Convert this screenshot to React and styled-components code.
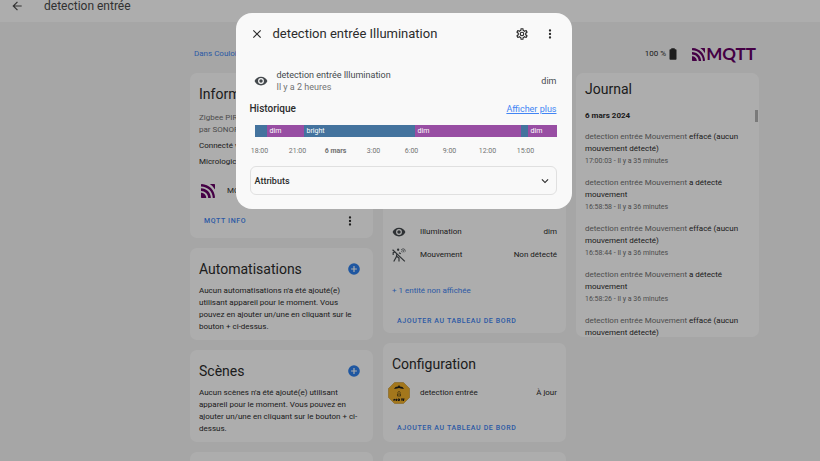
import React from "react";
import styled, { createGlobalStyle } from "styled-components";

const GlobalStyle = createGlobalStyle`
  * { box-sizing: border-box; }
  body { margin: 0; overflow: hidden; background: #f5f5f5; color: #2c2c2c; font: 8px/12px Roboto, sans-serif; }
  button { font: inherit; color: inherit; background: none; border: 0; padding: 0; cursor: pointer; }
  h1, h2, h3, p, ul { margin: 0; padding: 0; font-weight: 400; }
  a { color: #4285f4; text-decoration: none; }
`;

const paths = {
  back: "M20,11V13H8L13.5,18.5L12.08,19.92L4.16,12L12.08,4.08L13.5,5.5L8,11H20Z",
  close: "M19,6.41L17.59,5L12,10.59L6.41,5L5,6.41L10.59,12L5,17.59L6.41,19L12,13.41L17.59,19L19,17.59L13.41,12L19,6.41Z",
  dots: "M12,16A2,2 0 0,1 14,18A2,2 0 0,1 12,20A2,2 0 0,1 10,18A2,2 0 0,1 12,16M12,10A2,2 0 0,1 14,12A2,2 0 0,1 12,14A2,2 0 0,1 10,12A2,2 0 0,1 12,10M12,4A2,2 0 0,1 14,6A2,2 0 0,1 12,8A2,2 0 0,1 10,6A2,2 0 0,1 12,4Z",
  plus: "M17,13H13V17H11V13H7V11H11V7H13V11H17M12,2A10,10 0 0,0 2,12A10,10 0 0,0 12,22A10,10 0 0,0 22,12A10,10 0 0,0 12,2Z",
  chevron: "M7.41,8.58L12,13.17L16.59,8.58L18,10L12,16L6,10L7.41,8.58Z",
  battery: "M16.67,4H15V2H9V4H7.33A1.33,1.33 0 0,0 6,5.33V20.67C6,21.4 6.6,22 7.33,22H16.67A1.33,1.33 0 0,0 18,20.67V5.33C18,4.6 17.4,4 16.67,4Z",
  eye: "M12,9A3,3 0 0,0 9,12A3,3 0 0,0 12,15A3,3 0 0,0 15,12A3,3 0 0,0 12,9M12,17A5,5 0 0,1 7,12A5,5 0 0,1 12,7A5,5 0 0,1 17,12A5,5 0 0,1 12,17M12,4.5C7,4.5 2.73,7.61 1,12C2.73,16.39 7,19.5 12,19.5C17,19.5 21.27,16.39 23,12C21.27,7.61 17,4.5 12,4.5Z",
  cog: "M12,8A4,4 0 0,1 16,12A4,4 0 0,1 12,16A4,4 0 0,1 8,12A4,4 0 0,1 12,8M12,10A2,2 0 0,0 10,12A2,2 0 0,0 12,14A2,2 0 0,0 14,12A2,2 0 0,0 12,10M10,22C9.75,22 9.54,21.82 9.5,21.58L9.13,18.93C8.5,18.68 7.96,18.34 7.44,17.94L4.95,18.95C4.73,19.03 4.46,18.95 4.34,18.73L2.34,15.27C2.21,15.05 2.27,14.78 2.46,14.63L4.57,12.97L4.5,12L4.57,11L2.46,9.37C2.27,9.22 2.21,8.95 2.34,8.73L4.34,5.27C4.46,5.05 4.73,4.96 4.95,5.05L7.44,6.05C7.96,5.66 8.5,5.32 9.13,5.07L9.5,2.42C9.54,2.18 9.75,2 10,2H14C14.25,2 14.46,2.18 14.5,2.42L14.87,5.07C15.5,5.32 16.04,5.66 16.56,6.05L19.05,5.05C19.27,4.96 19.54,5.05 19.66,5.27L21.66,8.73C21.79,8.95 21.73,9.22 21.54,9.37L19.43,11L19.5,12L19.43,13L21.54,14.63C21.73,14.78 21.79,15.05 21.66,15.27L19.66,18.73C19.54,18.95 19.27,19.04 19.05,18.95L16.56,17.95C16.04,18.34 15.5,18.68 14.87,18.93L14.5,21.58C14.46,21.82 14.25,22 14,22H10M11.25,4L10.88,6.61C9.68,6.86 8.62,7.5 7.85,8.39L5.44,7.35L4.69,8.65L6.8,10.2C6.4,11.37 6.4,12.64 6.8,13.8L4.68,15.36L5.43,16.66L7.86,15.62C8.63,16.5 9.68,17.14 10.87,17.38L11.24,20H12.76L13.13,17.39C14.32,17.14 15.37,16.5 16.14,15.62L18.57,16.66L19.32,15.36L17.2,13.81C17.6,12.64 17.6,11.37 17.2,10.2L19.31,8.65L18.56,7.35L16.15,8.39C15.38,7.5 14.32,6.86 13.12,6.62L12.75,4H11.25Z",
};

const Svg = styled.svg`
  display: block;
  flex: none;
  width: ${(p) => p.$size}px;
  height: ${(p) => p.$size}px;
  fill: ${(p) => p.$color || "currentColor"};
`;

const Icon = ({ name, size = 14, color }) => (
  <Svg viewBox="0 0 24 24" $size={size} $color={color} aria-hidden="true">
    <path d={paths[name]} />
  </Svg>
);

const MotionOff = () => (
  <Svg viewBox="0 0 24 24" $size={14} $color="#44494d" aria-hidden="true">
    <circle cx="10.5" cy="3" r="2" />
    <g fill="none" stroke="#44494d" strokeWidth="2">
      <path d="M1 3L22 23M2 12V8L6 6.500M8.500 9L7.500 15L3 23M8 14L12 17V23M12 8L15 10" />
      <path d="M16 5.500Q17.500 5.500 17.500 7.500M15.500 2.500Q20.500 2.500 20.500 7.500M18 0.800Q23 1.500 23 6" strokeWidth="1.200" />
    </g>
  </Svg>
);

const MqttMark = ({ size }) => (
  <Svg viewBox="0 0 24 24" $size={size} $color="#660066" aria-hidden="true">
    <path d="M0 15.200C5 15.200 9 19.100 9 24H1.200A1.200 1.200 0 0 1 0 22.800Z" />
    <path d="M0 7.400C9.300 7.400 16.900 14.800 16.900 24H12.300C12.300 17.400 6.800 12 0 12Z" />
    <path d="M0 1.200A1.200 1.200 0 0 1 1.200 0C13.700 0.600 23.600 10.600 24 22.800A1.200 1.200 0 0 1 22.800 24H20.200C20.200 13 11.200 4.200 0 4.200Z" />
    <path d="M15.200 0H22.800A1.200 1.200 0 0 1 24 1.200V9.500A25 25 0 0 0 15.200 0Z" />
  </Svg>
);

const DeviceIcon = () => (
  <Svg viewBox="0 0 44 44" $size={22} $color="#f0b02a" aria-hidden="true">
    <path d="M13 1H31L43 13V31L31 43H13L1 31V13Z" stroke="#b88520" strokeWidth="1" />
    <path d="M12 14L15 10L20 9L22 6L24 9L29 10L32 14L26 13L22 12L18 13Z" fill="#1c1c1c" />
    <path d="M19 21L22 19L25 21M19 23V28H25V23M22 22V26" fill="none" stroke="#4b3a12" strokeWidth="1.500" />
    <path d="M12 38V34L14.500 36L17 34V38M20 34H23V37H20ZM26 34H33M28 34V38M31 34V38" fill="none" stroke="#1c1c1c" strokeWidth="2" />
  </Svg>
);

const Page = styled.div`
  height: 100vh;
  overflow: hidden;
`;
const Header = styled.header`
  display: flex;
  align-items: center;
  gap: 20px;
  height: 22px;
  padding: 0 10px 10px;
  background: #fff;
  color: #4a4a4a;
`;
const HeaderTitle = styled.h1`
  font-size: 12px;
  line-height: 14px;
`;
const Content = styled.main`
  padding: 22px 61px 0 190px;
`;
const Summary = styled.div`
  display: flex;
  align-items: center;
  justify-content: space-between;
  height: 20px;
  padding: 0 3px 0 4px;
  margin-bottom: 9px;
`;
const Status = styled.div`
  display: flex;
  align-items: center;
`;
const Brand = styled.div`
  display: flex;
  align-items: center;
  gap: 1px;
  margin-left: 12px;
  color: #660066;
  font: 700 17px/20px Lato, sans-serif;
`;
const Columns = styled.div`
  display: grid;
  grid-template-columns: repeat(3, minmax(0, 1fr));
  gap: 10px;
  align-items: start;
`;
const Column = styled.div`
  display: grid;
  gap: 10px;
`;
const Card = styled.section`
  min-height: ${(p) => p.$min || 0}px;
  padding: ${(p) => p.$pad || "12px 9px 8px"};
  border-radius: 7px;
  background: #fff;
`;
const CardHead = styled.div`
  display: flex;
  align-items: center;
  justify-content: space-between;
  padding-right: 3px;
  margin-bottom: ${(p) => p.$gap || 8}px;
`;
const CardTitle = styled.h2`
  font-size: 14px;
  line-height: 18px;
`;
const Muted = styled.p`
  color: #727272;
  margin-bottom: 4px;
`;
const Line = styled.p`
  margin-bottom: 4px;
`;
const Row = styled.div`
  display: flex;
  align-items: center;
  gap: ${(p) => p.$gap || 14}px;
  height: ${(p) => p.$h || 23}px;
  padding-left: ${(p) => p.$inset || 0}px;
`;
const IconSlot = styled.span`
  display: flex;
  flex: none;
  justify-content: center;
  width: 14px;
`;
const Name = styled.span`
  flex: 1;
`;
const Actions = styled.div`
  display: flex;
  align-items: center;
  justify-content: space-between;
  margin-top: ${(p) => p.$top || 0}px;
  padding: 0 7px 0 5px;
`;
const ActionButton = styled.button`
  color: #4285f4;
  font-size: 7px;
  font-weight: 500;
  letter-spacing: 0.09em;
  text-transform: uppercase;
`;
const TextButton = styled.button`
  display: block;
  color: #4285f4;
`;
const LogCard = styled.section`
  height: 264px;
  padding: 7px 0 0 9px;
  border-radius: 7px;
  background: #fff;
  overflow: hidden;
`;
const LogHead = styled.div`
  display: flex;
  justify-content: space-between;
  margin: 12px 1px 9px 0;
`;
const LogDate = styled.h3`
  font-size: 8px;
  font-weight: 700;
`;
const ScrollThumb = styled.div`
  width: 3px;
  height: 12px;
  background: #b4b4b4;
`;
const LogItem = styled.li`
  display: block;
  height: 46px;
  padding-right: 12px;
  color: #727272;
  b { color: #2c2c2c; font-weight: 400; }
  time { display: block; font-size: 7px; }
`;

const Scrim = styled.div`
  position: fixed;
  inset: 0;
  display: flex;
  justify-content: center;
  align-items: flex-start;
  padding: 13px 13px 0 0;
  background: rgba(0, 0, 0, 0.32);
`;
const Dialog = styled.div`
  width: 336px;
  max-width: 100%;
  padding: 12px 15px 14px 14px;
  border-radius: 16px;
  background: #f9f9f9;
`;
const DialogHead = styled.div`
  display: flex;
  align-items: center;
  gap: 9px;
`;
const DialogTitle = styled.h2`
  flex: 1;
  font-size: 13px;
  line-height: 18px;
`;
const IconButton = styled.button`
  display: grid;
  place-items: center;
  width: 14px;
  height: 14px;
  margin-left: ${(p) => p.$push || 0}px;
`;
const EntityRow = styled.div`
  display: flex;
  align-items: center;
  gap: 9px;
  margin-top: 26px;
  padding-left: 4px;
  color: #44494d;
  font-size: 9px;
`;
const EntityText = styled.div`
  flex: 1;
  small { display: block; font-size: 9px; color: #727272; }
`;
const HistoryHead = styled.div`
  display: flex;
  justify-content: space-between;
  margin-top: 10px;
  a { text-decoration: underline; font-size: 9px; }
`;
const HistoryTitle = styled.h3`
  font-size: 10px;
  font-weight: 500;
`;
const Timeline = styled.div`
  display: flex;
  height: 12px;
  margin: 10px 0 0 5px;
`;
const Segment = styled.div`
  flex: ${(p) => p.$span} 0 0;
  min-width: 0;
  text-indent: 3px;
  color: #fff;
  font-size: 7px;
  background: ${(p) => (p.$bright ? "#44739e" : "#984ea3")};
`;
const Axis = styled.div`
  display: grid;
  grid-template-columns: repeat(8, 38px);
  margin: 8px 0 0 -9px;
  color: #727272;
  font-size: 7px;
  text-align: center;
  b { font-weight: 700; }
`;
const Attributes = styled.button`
  display: flex;
  align-items: center;
  justify-content: space-between;
  width: 100%;
  height: 29px;
  margin-top: 9px;
  padding: 0 4px;
  border: 1px solid #e0e0e0;
  border-radius: 6px;
  font-size: 9px;
  font-weight: 500;
`;

const segments = [
  [12, true, ""], [37, false, "dim"], [111, true, "bright"],
  [106, false, "dim"], [7, true, ""], [29, false, "dim"],
];
const hours = ["18:00", "21:00", "6 mars", "3:00", "6:00", "9:00", "12:00", "15:00"];
const log = [
  ["effacé (aucun mouvement détecté)", "17:00:03 - Il y a 35 minutes"],
  ["a détecté mouvement", "16:58:58 - Il y a 36 minutes"],
  ["effacé (aucun mouvement détecté)", "16:58:44 - Il y a 36 minutes"],
  ["a détecté mouvement", "16:58:26 - Il y a 36 minutes"],
  ["effacé (aucun mouvement détecté)", null],
];

const EmptyCard = ({ title, children }) => (
  <Card $pad="12px 9px 7px">
    <CardHead $gap={7}>
      <CardTitle>{title}</CardTitle>
      <IconButton aria-label={`Ajouter ${title}`}><Icon name="plus" color="#2f80ed" /></IconButton>
    </CardHead>
    <p>{children}</p>
  </Card>
);

export default function App() {
  return (
    <>
      <GlobalStyle />
      <Page>
        <Header>
          <IconButton aria-label="Retour"><Icon name="back" /></IconButton>
          <HeaderTitle>detection entrée</HeaderTitle>
        </Header>
        <Content>
          <Summary>
            <a href="#area">Dans Couloir</a>
            <Status>
              <span>100 %</span>
              <Icon name="battery" />
              <Brand><MqttMark size={13} />MQTT</Brand>
            </Status>
          </Summary>
          <Columns>
            <Column>
              <Card $pad="12px 9px 10px">
                <CardHead $gap={9}><CardTitle>Informations</CardTitle></CardHead>
                <Muted>Zigbee PIR sensor<br />par SONOFF</Muted>
                <Line>Connecté via</Line>
                <Line>Micrologiciel</Line>
                <Row $h={38} $gap={12} $inset={2}><MqttMark size={14} /><Name>MQTT</Name></Row>
                <Actions $top={4}>
                  <ActionButton>MQTT Info</ActionButton>
                  <IconButton aria-label="Plus d'options"><Icon name="dots" /></IconButton>
                </Actions>
              </Card>
              <EmptyCard title="Automatisations">
                Aucun automatisations n'a été ajouté(e) utilisant appareil pour le moment. Vous pouvez en ajouter un/une en cliquant sur le bouton + ci-dessus.
              </EmptyCard>
              <EmptyCard title="Scènes">
                Aucun scènes n'a été ajouté(e) utilisant appareil pour le moment. Vous pouvez en ajouter un/une en cliquant sur le bouton + ci-dessus.
              </EmptyCard>
              <Card $min={60} />
            </Column>
            <Column>
              <Card $pad="147px 9px 6px">
                <Row><IconSlot><Icon name="eye" color="#44494d" /></IconSlot><Name>Illumination</Name><span>dim</span></Row>
                <Row><IconSlot><MotionOff /></IconSlot><Name>Mouvement</Name><span>Non détecté</span></Row>
                <Row $h={49}><TextButton>+ 1 entité non affichée</TextButton></Row>
                <Actions><ActionButton>Ajouter au tableau de bord</ActionButton></Actions>
              </Card>
              <Card>
                <CardHead><CardTitle>Configuration</CardTitle></CardHead>
                <Row><IconSlot><DeviceIcon /></IconSlot><Name>detection entrée</Name><span>À jour</span></Row>
                <Actions $top={18}><ActionButton>Ajouter au tableau de bord</ActionButton></Actions>
              </Card>
              <Card $min={60} />
            </Column>
            <LogCard>
              <CardTitle>Journal</CardTitle>
              <LogHead><LogDate>6 mars 2024</LogDate><ScrollThumb /></LogHead>
              <ul>
                {log.map(([event, when], i) => (
                  <LogItem key={i}>detection entrée Mouvement <b>{event}</b>{when && <time>{when}</time>}</LogItem>
                ))}
              </ul>
            </LogCard>
          </Columns>
        </Content>
      </Page>
      <Scrim>
        <Dialog role="dialog" aria-modal="true" aria-labelledby="dialog-title">
          <DialogHead>
            <IconButton aria-label="Fermer"><Icon name="close" /></IconButton>
            <DialogTitle id="dialog-title">detection entrée Illumination</DialogTitle>
            <IconButton aria-label="Paramètres"><Icon name="cog" /></IconButton>
            <IconButton aria-label="Plus d'options" $push={5}><Icon name="dots" /></IconButton>
          </DialogHead>
          <EntityRow>
            <Icon name="eye" />
            <EntityText>detection entrée Illumination<small>Il y a 2 heures</small></EntityText>
            <span>dim</span>
          </EntityRow>
          <HistoryHead>
            <HistoryTitle>Historique</HistoryTitle>
            <a href="#history">Afficher plus</a>
          </HistoryHead>
          <Timeline>
            {segments.map(([span, bright, label], i) => (
              <Segment key={i} $span={span} $bright={bright}>{label}</Segment>
            ))}
          </Timeline>
          <Axis>
            {hours.map((h) => (h === "6 mars" ? <b key={h}>{h}</b> : <span key={h}>{h}</span>))}
          </Axis>
          <Attributes aria-expanded="false">Attributs<Icon name="chevron" /></Attributes>
        </Dialog>
      </Scrim>
    </>
  );
}
